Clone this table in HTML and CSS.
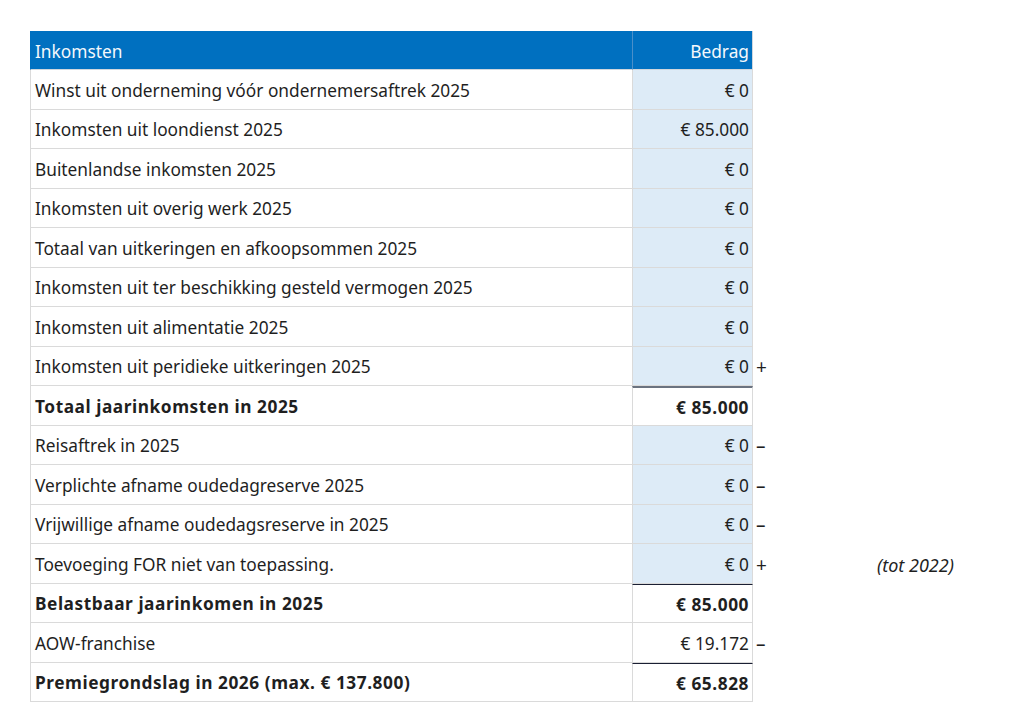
FILE: index.html
```html
<!DOCTYPE html>
<html lang="nl">
<head>
<meta charset="utf-8">
<title>Premiegrondslag</title>
<link rel="stylesheet" href="styles.css">
</head>
<body>
<div class="sheet">
  <div class="row head"><div class="label">Inkomsten</div><div class="amount">Bedrag</div><div class="sign"></div><div class="note"></div></div>
  <div class="row input"><div class="label">Winst uit onderneming vóór ondernemersaftrek 2025</div><div class="amount">€ 0</div><div class="sign"></div><div class="note"></div></div>
  <div class="row input"><div class="label">Inkomsten uit loondienst 2025</div><div class="amount">€ 85.000</div><div class="sign"></div><div class="note"></div></div>
  <div class="row input"><div class="label">Buitenlandse inkomsten 2025</div><div class="amount">€ 0</div><div class="sign"></div><div class="note"></div></div>
  <div class="row input"><div class="label">Inkomsten uit overig werk 2025</div><div class="amount">€ 0</div><div class="sign"></div><div class="note"></div></div>
  <div class="row input"><div class="label">Totaal van uitkeringen en afkoopsommen 2025</div><div class="amount">€ 0</div><div class="sign"></div><div class="note"></div></div>
  <div class="row input"><div class="label">Inkomsten uit ter beschikking gesteld vermogen 2025</div><div class="amount">€ 0</div><div class="sign"></div><div class="note"></div></div>
  <div class="row input"><div class="label">Inkomsten uit alimentatie 2025</div><div class="amount">€ 0</div><div class="sign"></div><div class="note"></div></div>
  <div class="row input"><div class="label">Inkomsten uit peridieke uitkeringen 2025</div><div class="amount">€ 0</div><div class="sign">+</div><div class="note"></div></div>
  <div class="row total total-gray"><div class="label">Totaal jaarinkomsten in 2025</div><div class="amount">€ 85.000</div><div class="sign"></div><div class="note"></div></div>
  <div class="row input"><div class="label">Reisaftrek in 2025</div><div class="amount">€ 0</div><div class="sign">–</div><div class="note"></div></div>
  <div class="row input"><div class="label">Verplichte afname oudedagreserve 2025</div><div class="amount">€ 0</div><div class="sign">–</div><div class="note"></div></div>
  <div class="row input"><div class="label">Vrijwillige afname oudedagsreserve in 2025</div><div class="amount">€ 0</div><div class="sign">–</div><div class="note"></div></div>
  <div class="row input"><div class="label">Toevoeging FOR niet van toepassing.</div><div class="amount">€ 0</div><div class="sign">+</div><div class="note">(tot 2022)</div></div>
  <div class="row total total-dark"><div class="label">Belastbaar jaarinkomen in 2025</div><div class="amount">€ 85.000</div><div class="sign"></div><div class="note"></div></div>
  <div class="row"><div class="label">AOW-franchise</div><div class="amount">€ 19.172</div><div class="sign">–</div><div class="note"></div></div>
  <div class="row total total-dark last"><div class="label">Premiegrondslag in 2026 (max. € 137.800)</div><div class="amount">€ 65.828</div><div class="sign"></div><div class="note"></div></div>
</div>
</body>
</html>
```

FILE: styles.css
```css
html, body {
  margin: 0;
  padding: 0;
  background: #ffffff;
}

body {
  font-family: "Noto Sans", "Open Sans", sans-serif;
  font-size: 17.3px;
  color: #1f1f1f;
}

.sheet {
  padding: 31px 0 0 30px;
}

.row {
  display: grid;
  grid-template-columns: 602px 121px 120px auto;
  height: 39.5px;
}

.row.head {
  height: 39px;
}

.label,
.amount {
  box-sizing: border-box;
  display: flex;
  align-items: center;
  padding-top: 2px;
  border-bottom: 1px solid #dadada;
  white-space: nowrap;
}

.label {
  border-left: 1px solid #dadada;
  padding-left: 4px;
}

.amount {
  justify-content: flex-end;
  padding-right: 3px;
  border-left: 1px solid #dadada;
  border-right: 1px solid #dadada;
}

.head .label,
.head .amount {
  background: #0070c0;
  color: #f4f8fc;
  border-bottom-color: #d0d6dd;
  border-left-color: #4a8fc9;
  border-right-color: #d0d6dd;
}

.head .label {
  border-left-color: #0070c0;
}

.input .amount {
  background: #ddebf7;
}

.total .label,
.total .amount {
  font-weight: 700;
  letter-spacing: 0.55px;
}

.total-gray .amount {
  border-top: 2px solid #6b7380;
}

.total-dark .amount {
  border-top: 1px solid #1a1f33;
}

.sign {
  display: flex;
  align-items: center;
  padding-top: 2px;
  padding-left: 3px;
  font-size: 19px;
}

.note {
  display: flex;
  align-items: center;
  padding-top: 2px;
  padding-left: 4px;
  font-style: italic;
  font-size: 18px;
  color: #1f1f1f;
}
```
